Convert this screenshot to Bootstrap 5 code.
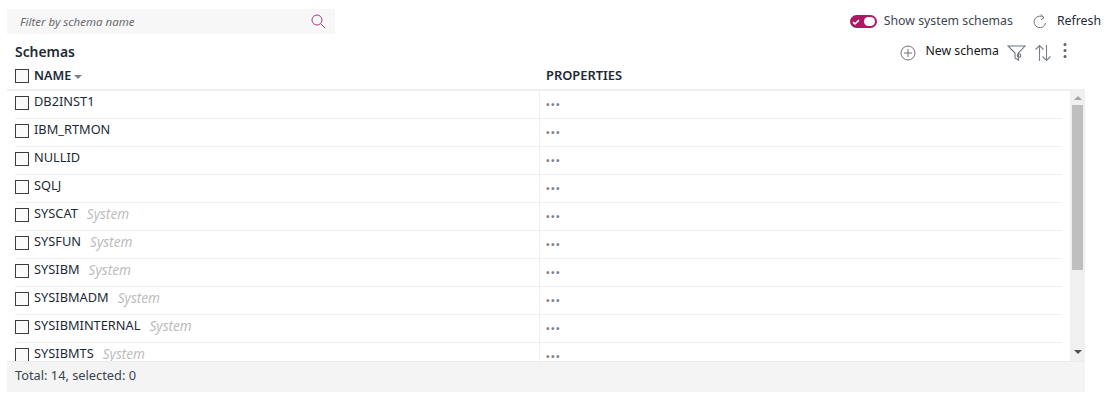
<!doctype html>
<html lang="en"><head><meta charset="utf-8"><title>Schemas</title>
<link rel="stylesheet" href="https://cdn.jsdelivr.net/npm/bootstrap@5.3.0/dist/css/bootstrap.min.css">
<style>
body{font-family:"Noto Sans",sans-serif;font-size:12.8px;color:#1d2a36;background:#fff;overflow:hidden}
.shell{width:1108px;height:402px;padding:9px 7px 0}
.topbar{height:25px}
.searchbox{width:328px;height:25px;background:#f7f7f7;padding:0 9px 0 13px}
.searchbox input{border:0;background:transparent;outline:0;flex:1;font-style:italic;font-size:11.5px;color:#6b6b70;padding:0;font-family:inherit}
.searchbox input::placeholder{color:#6b6b70;opacity:1}
.tools{margin-right:0}
.toggle-pill{width:27px;height:13px;border-radius:7px;background:#ad1763;padding:2px;margin-right:7px}
.toggle-knob{width:11px;height:9px;border-radius:5px;background:#fff}
.tool-txt{color:#3e4652;font-size:12.3px;margin-top:-1px}
.refresh-txt{color:#1d2a36;font-size:12.3px;margin-left:10px;margin-top:-1px}
.refresh-ico{margin-left:20px}
.table-wrap{width:1078px}
.subbar{height:31px;padding-left:8px;padding-right:17px}
.subbar-title{font-weight:600;font-size:13.9px;color:#1d2a36;margin-top:5px}
.sub-tools{margin-top:6px}
.new-txt{font-size:12.3px;color:#161616;margin:-2px 8px 0 9px}
.arrows-ico{margin-left:8px}
.more-ico{margin-left:10px;margin-top:-3px}
.head-row{height:26px;border-bottom:2px solid #efefef;font-weight:600;font-size:12.6px;color:#1d2a36;padding-left:8px}
.head-props{font-size:12.9px;padding-left:6px}
.head-row>*{margin-top:-2px}
.col-name{width:525px;flex:none}
.box{width:14px;height:14px;border:1px solid #3d3d3d;background:#fafafa;margin-right:5px;flex:none}
.sort-mark{width:0;height:0;border:4px solid transparent;border-top-color:#7c8087;border-bottom:0;margin:3px 0 0 3px}
.body-wrap{height:270px}
.list-pane{flex:1;overflow:hidden;padding-left:8px;min-width:0;padding-right:8px}
.row-line{height:28px;border-bottom:1px solid #efefef;color:#1d2a36}
.row-line .col-name{height:100%;border-right:1px solid #efefef;padding-top:5px;line-height:15px}
.row-line .col-name .nm{margin-top:-2px}
.sys-tag{font-style:italic;color:#bdbdbd;margin-left:9px;font-size:13.6px;margin-top:-2px}
.dots{color:#7b7f8c;font-weight:700;letter-spacing:1.4px;padding-left:6px;padding-top:9px;line-height:1;font-size:9.5px}
.scroll-track{width:15px;background:#f0f0f0}
.scroll-up{width:0;height:0;border:4px solid transparent;border-bottom-color:#a3a3a3;border-top:0;margin:5px auto 5px}
.scroll-thumb{width:11px;height:165px;background:#bfbfbf;margin:0 auto}
.scroll-down{width:0;height:0;border:4px solid transparent;border-top-color:#505050;border-bottom:0;margin:auto auto 7px}
.foot-bar{height:31px;background:#f4f4f4;border-top:1px solid #ececec;padding:0 0 2px 8px;color:#3a4450;font-size:12.8px}
</style></head><body>
<div class="shell">
 <div class="topbar d-flex justify-content-between align-items-center">
  <div class="searchbox d-flex align-items-center">
   <input type="text" placeholder="Filter by schema name" aria-label="Filter by schema name">
   <svg width="15" height="15" viewBox="0 0 15 15" fill="none" stroke="#ad3a7c" stroke-width="1"><circle cx="6" cy="6" r="5"/><path d="M9.6 9.6 14 14"/></svg>
  </div>
  <div class="tools d-flex align-items-center">
   <div class="toggle-pill d-flex align-items-center justify-content-between">
    <svg width="8" height="8" viewBox="0 0 8 8" fill="none" stroke="#fff" stroke-width="1.6"><path d="M1 4.2 3 6 7 2.2"/></svg>
    <div class="toggle-knob"></div>
   </div>
   <span class="tool-txt">Show system schemas</span>
   <svg class="refresh-ico" width="14" height="16" viewBox="0 0 14 16" fill="none" stroke="#74787f" stroke-width="1"><path d="M10.8 3.6A5.8 5.8 0 1 0 12.6 9"/><path d="M7.5 .5l3.5 3-3 2.4"/></svg>
   <span class="refresh-txt">Refresh</span>
  </div>
 </div>
 <div class="table-wrap">
 <div class="subbar d-flex justify-content-between align-items-center">
  <div class="subbar-title">Schemas</div>
  <div class="sub-tools d-flex align-items-center">
   <svg width="16" height="16" viewBox="0 0 16 16" fill="none" stroke="#6f727a" stroke-width="1"><circle cx="8" cy="8" r="7"/><path d="M8 4v8M4 8h8"/></svg>
   <span class="new-txt">New schema</span>
   <svg width="19" height="18" viewBox="0 0 19 18" fill="none" stroke="#6f7680" stroke-width="1.1"><path d="M1 2h17l-6.5 7v7L8 14.2V9z"/><circle cx="12" cy="11.5" r="1.7"/></svg>
   <svg class="arrows-ico" width="18" height="18" viewBox="0 0 18 18" fill="none" stroke="#7a818b" stroke-width="1.1"><path d="M5.5 17V1.5M1.5 5.5l4-4 4 4M12.5 1v15.5M8.5 12.5l4 4 4-4"/></svg>
   <svg class="more-ico" width="6" height="18" viewBox="0 0 6 18" fill="#5a626c"><circle cx="3" cy="2.5" r="1.5"/><circle cx="3" cy="8.5" r="1.5"/><circle cx="3" cy="14.5" r="1.5"/></svg>
  </div>
 </div>
 <div class="head-row d-flex align-items-center">
  <div class="col-name d-flex align-items-center"><span class="box"></span>NAME<span class="sort-mark"></span></div>
  <div class="head-props">PROPERTIES</div>
 </div>
 <div class="body-wrap d-flex">
  <div class="list-pane">
   <div class="row-line d-flex"><div class="col-name d-flex"><span class="box"></span><span class="nm">DB2INST1</span></div><div class="dots">•••</div></div>
   <div class="row-line d-flex"><div class="col-name d-flex"><span class="box"></span><span class="nm">IBM_RTMON</span></div><div class="dots">•••</div></div>
   <div class="row-line d-flex"><div class="col-name d-flex"><span class="box"></span><span class="nm">NULLID</span></div><div class="dots">•••</div></div>
   <div class="row-line d-flex"><div class="col-name d-flex"><span class="box"></span><span class="nm">SQLJ</span></div><div class="dots">•••</div></div>
   <div class="row-line d-flex"><div class="col-name d-flex"><span class="box"></span><span class="nm">SYSCAT</span><span class="sys-tag">System</span></div><div class="dots">•••</div></div>
   <div class="row-line d-flex"><div class="col-name d-flex"><span class="box"></span><span class="nm">SYSFUN</span><span class="sys-tag">System</span></div><div class="dots">•••</div></div>
   <div class="row-line d-flex"><div class="col-name d-flex"><span class="box"></span><span class="nm">SYSIBM</span><span class="sys-tag">System</span></div><div class="dots">•••</div></div>
   <div class="row-line d-flex"><div class="col-name d-flex"><span class="box"></span><span class="nm">SYSIBMADM</span><span class="sys-tag">System</span></div><div class="dots">•••</div></div>
   <div class="row-line d-flex"><div class="col-name d-flex"><span class="box"></span><span class="nm">SYSIBMINTERNAL</span><span class="sys-tag">System</span></div><div class="dots">•••</div></div>
   <div class="row-line d-flex"><div class="col-name d-flex"><span class="box"></span><span class="nm">SYSIBMTS</span><span class="sys-tag">System</span></div><div class="dots">•••</div></div>
  </div>
  <div class="scroll-track d-flex flex-column">
   <div class="scroll-up"></div><div class="scroll-thumb"></div><div class="scroll-down"></div>
  </div>
 </div>
 <div class="foot-bar d-flex align-items-center">Total: 14, selected: 0</div>
 </div>
</div>
<script src="https://cdn.jsdelivr.net/npm/bootstrap@5.3.0/dist/js/bootstrap.bundle.min.js"></script>
</body></html>
